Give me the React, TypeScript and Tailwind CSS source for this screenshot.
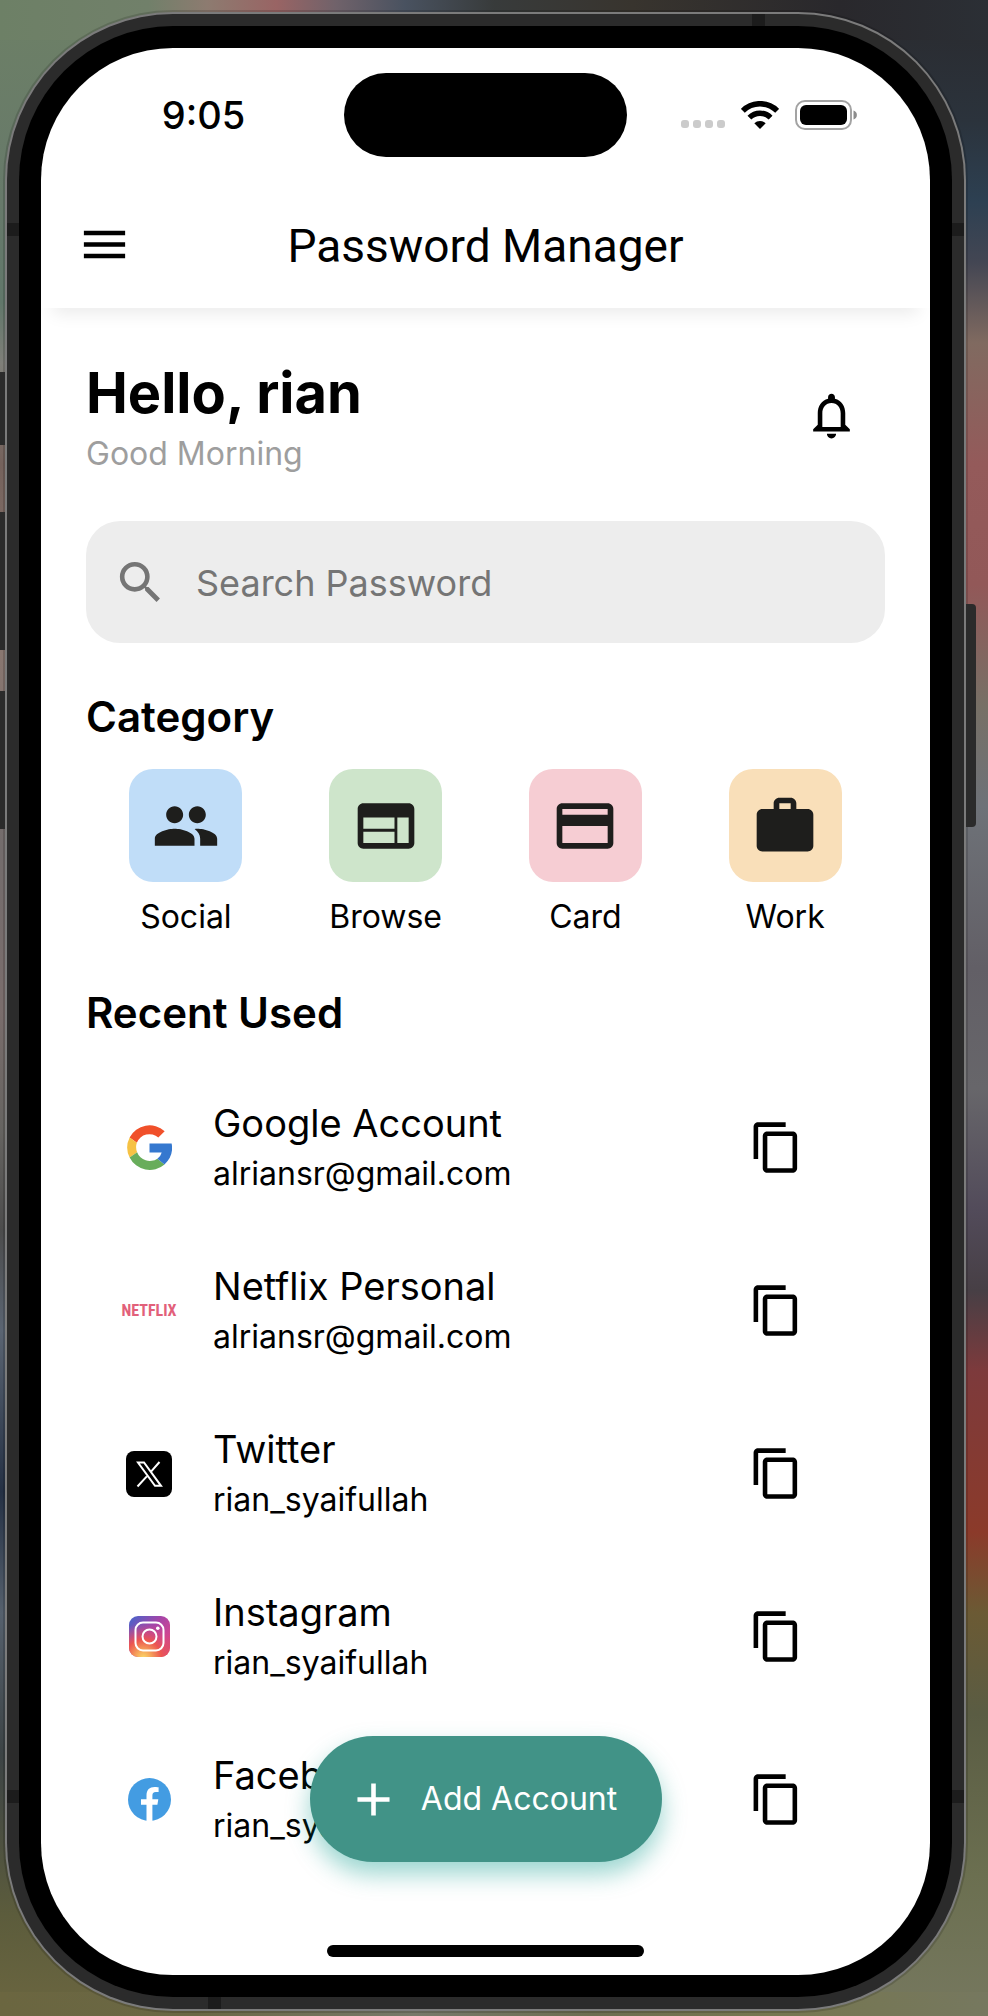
import type { ReactNode } from "react";
import {
  MdAdd,
  MdContentCopy,
  MdCreditCard,
  MdMenu,
  MdNotificationsNone,
  MdPeople,
  MdSearch,
  MdWeb,
  MdWork,
} from "react-icons/md";

function GoogleLogo() {
  return (
    <svg viewBox="0 0 48 48" className="size-[45px]" aria-hidden="true">
      <path fill="#f0502a" d="M2.8 13.3A24 24 0 0 1 40.2 6.6L33.4 13.4A14.4 14.4 0 0 0 10.5 18.9Z" />
      <path fill="#f6c244" d="M2.8 13.3A24 24 0 0 0 2.8 34.7L10.8 29A14.4 14.4 0 0 1 10.5 18.9Z" />
      <path fill="#68ad5b" d="M2.8 34.7A24 24 0 0 0 40 42L32.4 35.9A14.4 14.4 0 0 1 10.8 29Z" />
      <path fill="#3578cf" d="M24 19.6H47.6A24 24 0 0 1 40 42L32.4 35.9A12 12 0 0 0 37 29.2H24Z" />
    </svg>
  );
}

function NetflixLogo() {
  return (
    <span className="font-['Liberation_Sans_Narrow','Roboto_Condensed','Liberation_Sans',sans-serif] text-base font-bold leading-none text-[#e2607a]">
      NETFLIX
    </span>
  );
}

function XLogo() {
  return (
    <svg viewBox="0 0 46 46" className="size-[46px]" aria-hidden="true">
      <rect width="46" height="46" rx="8" fill="#000" />
      <path
        d="M12 11.5H18L35 34.8H29Z M33.5 11L24.6 21.2 M20.8 25.4L11.5 35.5"
        fill="none"
        stroke="#fff"
        strokeWidth="2"
      />
    </svg>
  );
}

function InstagramLogo() {
  return (
    <svg viewBox="0 0 41 41" className="size-[41px]" aria-hidden="true">
      <defs>
        <linearGradient id="ig-base" x1="0" y1="0" x2="1" y2="0.9">
          <stop offset="0" stopColor="#4166cd" />
          <stop offset="0.45" stopColor="#a545a8" />
          <stop offset="0.75" stopColor="#cf4692" />
          <stop offset="1" stopColor="#e2505c" />
        </linearGradient>
        <radialGradient id="ig-glow" cx="0.35" cy="1.02" r="0.85">
          <stop offset="0" stopColor="#fbd768" />
          <stop offset="0.2" stopColor="#f6a95c" />
          <stop offset="0.52" stopColor="#ec5550" />
          <stop offset="1" stopColor="#d6468a" stopOpacity="0" />
        </radialGradient>
      </defs>
      <rect width="41" height="41" rx="9" fill="url(#ig-base)" />
      <rect width="41" height="41" rx="9" fill="url(#ig-glow)" />
      <rect x="6.5" y="6.5" width="28" height="28" rx="7.5" fill="none" stroke="#fff" strokeWidth="2" />
      <circle cx="20.5" cy="20.5" r="7" fill="none" stroke="#fff" strokeWidth="2" />
      <circle cx="28.8" cy="12.2" r="1.8" fill="#fff" />
    </svg>
  );
}

function FacebookLogo() {
  return (
    <svg viewBox="0 0 43 43" className="size-[43px]" aria-hidden="true">
      <circle cx="21.5" cy="21.5" r="21.5" fill="#439ce2" />
      <path
        fill="#fff"
        d="M18.5 43V26.8H13V21.2H18.5V17.6C18.5 11.8 21.6 9 26.6 9C28.6 9 30.6 9.3 30.6 9.3V14H27.9C25.2 14 24.4 15.6 24.4 17.4V21.2H30.3L29.4 26.8H24.4V43Z"
      />
    </svg>
  );
}

function WifiIcon() {
  return (
    <svg viewBox="0 0 38 28" className="h-7 w-[38px]" aria-hidden="true">
      <path d="M1.8 9.8A24.5 24.5 0 0 1 36.2 9.8" fill="none" stroke="#000" strokeWidth="5.6" />
      <path d="M8.4 16.6A15 15 0 0 1 29.6 16.6" fill="none" stroke="#000" strokeWidth="5.4" />
      <path d="M19 28L13.3 22.3A8.4 8.4 0 0 1 24.7 22.3Z" />
    </svg>
  );
}

function BatteryIcon() {
  return (
    <svg viewBox="0 0 63 30" className="h-[30px] w-[63px]" aria-hidden="true">
      <rect x="1" y="1" width="55" height="28" rx="9" fill="none" stroke="#a3a3a3" strokeWidth="2" />
      <rect x="5" y="5" width="47" height="20" rx="6" />
      <path d="M58.5 10.5C63 12 63 18 58.5 19.5Z" fill="#8c8c8c" />
    </svg>
  );
}

const categories: { label: string; tint: string; icon: ReactNode }[] = [
  { label: "Social", tint: "bg-[#c0ddf8]", icon: <MdPeople /> },
  { label: "Browse", tint: "bg-[#cee5cb]", icon: <MdWeb /> },
  { label: "Card", tint: "bg-[#f6cdd3]", icon: <MdCreditCard /> },
  { label: "Work", tint: "bg-[#f9dfb9]", icon: <MdWork /> },
];

const accounts: { name: string; user: string; logo: ReactNode }[] = [
  { name: "Google Account", user: "alriansr@gmail.com", logo: <GoogleLogo /> },
  { name: "Netflix Personal", user: "alriansr@gmail.com", logo: <NetflixLogo /> },
  { name: "Twitter", user: "rian_syaifullah", logo: <XLogo /> },
  { name: "Instagram", user: "rian_syaifullah", logo: <InstagramLogo /> },
  { name: "Facebook", user: "rian_syaifullah", logo: <FacebookLogo /> },
];

function StatusBar() {
  return (
    <div className="grid h-[132px] grid-cols-[1fr_283px_1fr] items-center pt-[2px]">
      <span className="pl-[22px] text-center text-[38px] font-medium leading-none">9:05</span>
      <div className="h-[84px] rounded-full bg-black" />
      <div className="flex items-center justify-center gap-4 pr-[18px]">
        <div className="flex gap-1 self-end pb-[2px]">
          <span className="size-2 rounded-[3px] bg-[#cbcbcb]" />
          <span className="size-2 rounded-[3px] bg-[#cbcbcb]" />
          <span className="size-2 rounded-[3px] bg-[#cbcbcb]" />
          <span className="size-2 rounded-[3px] bg-[#cbcbcb]" />
        </div>
        <WifiIcon />
        <BatteryIcon />
      </div>
    </div>
  );
}

function Screen() {
  return (
    <div className="relative overflow-hidden rounded-[132px] bg-white">
      <header className="shadow-[0_18px_16px_-12px_rgba(0,0,0,0.08)]">
        <StatusBar />
        <div className="grid h-32 grid-cols-[55px_1fr_55px] items-center px-9">
          <button type="button" aria-label="Menu">
            <MdMenu className="size-[55px]" />
          </button>
          <h1 className="pt-1 text-center font-[Roboto,sans-serif] text-[46px] leading-[56px]">Password Manager</h1>
        </div>
      </header>

      <main className="px-[45px] pt-[52px]">
        <div className="flex items-center justify-between pr-[26px]">
          <div className="flex flex-col gap-2">
            <h2 className="text-[56px] font-bold leading-[66px]">Hello, rian</h2>
            <p className="text-[32px] leading-10 text-[#9e9e9e]">Good Morning</p>
          </div>
          <button type="button" aria-label="Notifications" className="pb-1">
            <MdNotificationsNone className="size-[55px]" />
          </button>
        </div>

        <label className="mt-[47px] flex h-[122px] items-center gap-7 rounded-[34px] bg-[#ededed] px-[27px] text-[#757575]">
          <MdSearch className="size-[55px] shrink-0" />
          <input
            type="search"
            aria-label="Search Password"
            placeholder="Search Password"
            className="min-w-0 flex-1 bg-transparent pt-[2px] text-4xl outline-none placeholder:text-[#757575]"
          />
        </label>

        <h2 className="mt-[50px] text-[42px] font-semibold leading-[48px]">Category</h2>
        <div className="mt-7 grid grid-cols-4">
          {categories.map((c) => (
            <button key={c.label} type="button" className="flex flex-col items-center gap-[15px]">
              <span
                className={`flex size-[113px] items-center justify-center rounded-3xl text-[68px] text-[#1e1e1c] ${c.tint}`}
              >
                {c.icon}
              </span>
              <span className="text-[32px] leading-10">{c.label}</span>
            </button>
          ))}
        </div>

        <h2 className="mt-[52px] text-[42px] font-semibold leading-[48px]">Recent Used</h2>
        <ul className="mt-[29px]">
          {accounts.map((a) => (
            <li key={a.name} className="flex h-[163px] items-center pl-[35px] pr-[81px]">
              <div className="flex w-14 shrink-0 justify-center">{a.logo}</div>
              <div className="ml-9 flex-1">
                <p className="text-[38px] leading-[48px]">{a.name}</p>
                <p className="mt-1 text-[32px] leading-[46px]">{a.user}</p>
              </div>
              <button type="button" aria-label={`Copy ${a.name} password`}>
                <MdContentCopy className="size-[55px]" />
              </button>
            </li>
          ))}
        </ul>
      </main>

      <div className="mx-auto mb-[18px] mt-16 h-3 w-[317px] rounded-full bg-black" />

      <button
        type="button"
        className="absolute bottom-[113px] left-1/2 flex h-[126px] w-[352px] -translate-x-1/2 items-center rounded-full bg-[#419387] pl-9 text-[32px] text-white shadow-[0_12px_24px_rgba(0,150,136,0.4)]"
      >
        <MdAdd className="size-[55px]" />
        <span className="flex-1 pr-6 text-center">Add Account</span>
      </button>
    </div>
  );
}

export default function App() {
  return (
    <div className="relative flex min-h-screen flex-col bg-[#44443e] bg-[linear-gradient(to_right,#6d8066_0%,#71806a_15%,#8d7b70_21%,#996464_28%,#70626a_34%,#495260_41%,#383b3b_50%,#38342e_64%,#29282c_85%,#2b2f35_100%),linear-gradient(to_right,#6b6640_0%,#6a6744_20%,#77796a_42%,#6c6d50_60%,#76764f_78%,#76785f_100%),linear-gradient(to_bottom,#6d8066_0%,#67796a_10%,#61776a_15%,#7f7f79_18%,#75625c_23%,#8a7770_32%,#736c6c_42%,#7a6d6c_50%,#666461_56%,#4c4c4c_61%,#5a6472_66%,#243044_74%,#55606d_80%,#3c4345_87%,#5c5c3c_95%,#6b6640_100%),linear-gradient(to_bottom,#2a2a2e_0%,#2b333c_6%,#2d4052_10%,#434653_13%,#806a60_17%,#945a5a_23%,#925858_29%,#777066_35%,#6e7278_40%,#625f66_48%,#67666a_54%,#524b5a_60%,#473f45_64%,#7d3a3c_68%,#8b3a2a_76%,#6b5a34_80%,#5a5c43_85%,#6b6f50_93%,#76785f_100%)] bg-[size:100%_40px,100%_24px,50%_100%,50%_100%] bg-[position:top,bottom,left,right] bg-no-repeat pb-[5px] pl-[5px] pr-[22px] pt-3 font-[Inter,'Liberation_Sans',sans-serif] text-black">
      <div className="relative rounded-[168px] bg-[#7b7b7b] p-[2px] shadow-[0_0_0_2px_rgba(0,0,0,0.15)]">
        {/* Side buttons */}
        <span className="absolute -left-[5px] top-[360px] h-[73px] w-[5px] bg-[#2b2b2b]" />
        <span className="absolute -left-[5px] top-[500px] h-[138px] w-[5px] bg-[#2b2b2b]" />
        <span className="absolute -left-[5px] top-[679px] h-[138px] w-[5px] bg-[#2b2b2b]" />
        <span className="absolute -right-[10px] top-[592px] h-[223px] w-[10px] rounded-r-sm bg-[#2b2b2b]" />
        <div className="relative rounded-[166px] bg-[#2b2b2b] p-3">
          {/* Antenna bands */}
          <span className="absolute left-0 right-0 top-[209px] h-[13px] bg-[#1c1c1c]" />
          <span className="absolute bottom-[206px] left-0 right-0 h-[13px] bg-[#1c1c1c]" />
          <span className="absolute right-[199px] top-0 h-3 w-[13px] bg-[#1c1c1c]" />
          <span className="absolute bottom-0 left-[201px] h-3 w-[13px] bg-[#1c1c1c]" />
          <div className="relative rounded-[154px] bg-black p-[22px]">
            <Screen />
          </div>
        </div>
      </div>
    </div>
  );
}
